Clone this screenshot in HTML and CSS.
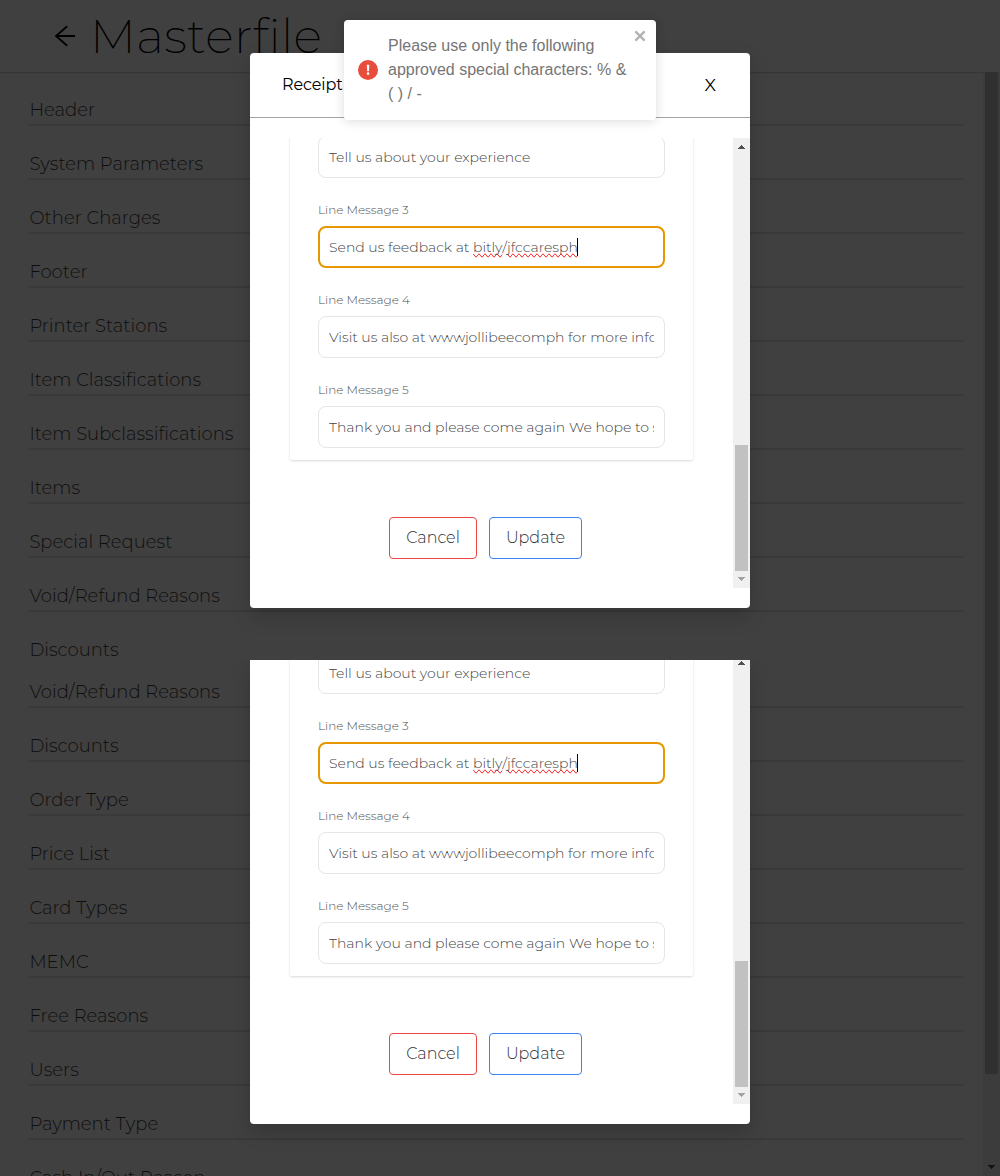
FILE: index.html
```html
<!DOCTYPE html>
<html lang="en">
<head>
<meta charset="utf-8">
<title>Masterfile</title>
<link rel="stylesheet" href="styles.css">
</head>
<body>
<div class="page">
  <header class="topbar">
    <svg class="back" width="22" height="22" viewBox="0 0 22 22"><path d="M21 11H2M13.2 1.2L2 11l11.2 9.8" fill="none" stroke="#000" stroke-width="1.8"/></svg>
    <h1 class="title">Masterfile</h1>
  </header>
  <div class="content">
    <ul class="menu">
      <li>Header</li>
      <li>System Parameters</li>
      <li>Other Charges</li>
      <li>Footer</li>
      <li>Printer Stations</li>
      <li>Item Classifications</li>
      <li>Item Subclassifications</li>
      <li>Items</li>
      <li>Special Request</li>
      <li>Void/Refund Reasons</li>
      <li class="short">Discounts</li>
      <li>Void/Refund Reasons</li>
      <li>Discounts</li>
      <li>Order Type</li>
      <li>Price List</li>
      <li>Card Types</li>
      <li>MEMC</li>
      <li>Free Reasons</li>
      <li>Users</li>
      <li>Payment Type</li>
      <li>Cash In/Out Reason</li>
    </ul>
    <div class="page-scroll">
      <div class="page-thumb"></div>
      <svg width="7" height="4" viewBox="0 0 7 4" shape-rendering="crispEdges"><path d="M0 0h7v1H6v1H5v1H4v1H3V3H2V2H1V1H0z" fill="#141414"/></svg>
    </div>
  </div>
</div>

<div class="overlay">
  <section class="modal">
    <div class="modal-head"><span>Receipt</span><span class="modal-x">X</span></div>
    <div class="viewport">
      <div class="form">
        <div class="card">
          <div class="field"><div class="input">Tell us about your experience</div></div>
          <div class="field"><label>Line Message 3</label><div class="input focus">Send us feedback at <span class="typo">bitly</span>/<span class="typo">jfccaresph</span><i class="caret"></i></div></div>
          <div class="field"><label>Line Message 4</label><div class="input"><span class="clip">Visit us also at wwwjollibeecomph for more info</span></div></div>
          <div class="field"><label>Line Message 5</label><div class="input"><span class="clip">Thank you and please come again We hope to see</span></div></div>
        </div>
        <div class="actions"><button class="btn cancel">Cancel</button><button class="btn update">Update</button></div>
      </div>
      <div class="scroll">
        <svg width="7" height="4" viewBox="0 0 7 4" shape-rendering="crispEdges"><path d="M3 0h1v1h1v1h1v1h1v1H0V3h1V2h1V1h1z" fill="#505050"/></svg>
        <div class="thumb"></div>
        <svg width="7" height="4" viewBox="0 0 7 4" shape-rendering="crispEdges"><path d="M0 0h7v1H6v1H5v1H4v1H3V3H2V2H1V1H0z" fill="#a3a3a3"/></svg>
      </div>
    </div>
  </section>

  <section class="modal lower">
    <div class="viewport">
      <div class="form">
        <div class="card">
          <div class="field"><div class="input">Tell us about your experience</div></div>
          <div class="field"><label>Line Message 3</label><div class="input focus">Send us feedback at <span class="typo">bitly</span>/<span class="typo">jfccaresph</span><i class="caret"></i></div></div>
          <div class="field"><label>Line Message 4</label><div class="input"><span class="clip">Visit us also at wwwjollibeecomph for more info</span></div></div>
          <div class="field"><label>Line Message 5</label><div class="input"><span class="clip">Thank you and please come again We hope to see</span></div></div>
        </div>
        <div class="actions"><button class="btn cancel">Cancel</button><button class="btn update">Update</button></div>
      </div>
      <div class="scroll">
        <svg width="7" height="4" viewBox="0 0 7 4" shape-rendering="crispEdges"><path d="M3 0h1v1h1v1h1v1h1v1H0V3h1V2h1V1h1z" fill="#505050"/></svg>
        <div class="thumb"></div>
        <svg width="7" height="4" viewBox="0 0 7 4" shape-rendering="crispEdges"><path d="M0 0h7v1H6v1H5v1H4v1H3V3H2V2H1V1H0z" fill="#a3a3a3"/></svg>
      </div>
    </div>
  </section>
</div>

<div class="toast">
  <svg width="20" height="20" viewBox="0 0 20 20"><circle cx="10" cy="10" r="10" fill="#e74c3c"/><path d="M8.8 4.8h2.5l-.4 6.4H9.2z" fill="#fff"/><circle cx="10.05" cy="13.6" r="1.3" fill="#fff"/></svg>
  <p>Please use only the following approved special characters: % &amp; ( ) / -</p>
  <svg class="toast-x" width="12" height="12" viewBox="0 0 12 12"><path d="M1.400 1.400l9.200 9.200M10.600 1.400l-9.200 9.200" stroke="#b0b0b0" stroke-width="2.200"/></svg>
</div>
</body>
</html>
```
FILE: styles.css
```css
* { box-sizing: border-box; }
body {
  margin: 0;
  width: 1000px;
  height: 1176px;
  overflow: hidden;
  position: relative;
  background: #404040;
  font-family: Montserrat, Inter, "Liberation Sans", sans-serif;
  font-weight: 300;
}
.page { height: 1176px; overflow: hidden; }
.topbar {
  height: 72px;
  display: flex;
  align-items: center;
  padding-left: 54px;
  box-shadow: 0 1px 1px rgba(0, 0, 0, .15);
}
.title { margin: 0 0 0 14px; font-size: 48px; font-weight: 200; line-height: 72px; letter-spacing: .3px; color: #000; }
.content { display: flex; justify-content: space-between; height: 1104px; }
.menu { list-style: none; margin: 0 0 0 29px; padding: 0; width: 934px; }
.menu li {
  height: 54px;
  padding: 26px 0 0 .4px;
  line-height: 24px;
  font-size: 18px;
  letter-spacing: .02px;
  border-bottom: 2px solid #393939;
  color: #0e0e0e;
}
.menu .short { height: 42px; border: 0; }
.page-scroll {
  width: 17px;
  display: flex;
  flex-direction: column;
  justify-content: space-between;
  align-items: center;
  background: #3c3c3c;
  padding-bottom: 7px;
}
.page-thumb { width: 13px; height: 1002px; background: #303030; }

.overlay { position: absolute; left: 250px; top: 53px; width: 500px; display: flex; flex-direction: column; gap: 52px; }
.modal { height: 555px; background: #fff; border-radius: 4px; box-shadow: 0 8px 20px rgba(0, 0, 0, .18); }
.modal.lower { height: 464px; border-radius: 0 0 4px 4px; clip-path: inset(0 -40px -40px -40px); }
.modal-head {
  height: 65px;
  border-bottom: 1px solid #a3a3a3;
  display: flex;
  align-items: center;
  justify-content: space-between;
  padding: 0 34px 1px 32px;
  font-size: 16px;
  letter-spacing: -.1px;
  font-weight: 400;
  color: #000;
}
.modal-x { font-size: 17.5px; letter-spacing: 0; }
.viewport { height: 450px; margin-top: 20px; overflow: hidden; display: flex; justify-content: space-between; align-items: flex-end; }
.lower .viewport { height: 444px; margin-top: 0; }
.form { width: 483px; height: 470px; padding: 0 40px; }
.card {
  width: 403px;
  height: 342px;
  padding: 18px 28px 0;
  border-radius: 2px;
  box-shadow: 0 1px 3px rgba(0, 0, 0, .1), 0 1px 2px rgba(0, 0, 0, .06);
}
.field { display: flex; flex-direction: column; margin-bottom: 22px; }
.field label { font-size: 12px; line-height: 20px; margin-bottom: 6px; color: #4f4f4f; }
.input {
  width: 347px;
  height: 42px;
  border: 1px solid #e5e5ea;
  border-radius: 8px;
  padding: 0 10px;
  display: flex;
  align-items: center;
  white-space: pre;
  font-size: 14px;
  color: #444;
}
.input.focus { border: 2px solid #e59700; padding: 0 9px; }
.clip { overflow: hidden; width: 325px; }
.typo { text-decoration: spelling-error; }
.caret { width: 1px; height: 18px; margin-left: -1px; background: #000; }
.actions { display: flex; gap: 12px; padding: 57px 0 0 99px; }
.btn {
  height: 42px;
  padding: 0 0 2px;
  border-radius: 4px;
  background: #fff;
  font: inherit;
  font-size: 16px;
  color: #303036;
}
.cancel { width: 88px; border: 1px solid #ef4444; }
.update { width: 93px; border: 1px solid #3b82f6; }
.scroll {
  width: 17px;
  height: 450px;
  background: #f0f0f0;
  display: flex;
  flex-direction: column;
  align-items: center;
  padding: 7px 0;
}
.thumb { width: 13px; height: 126px; margin: 296px 0 6px; background: #c1c1c1; flex: none; }

.toast {
  position: absolute;
  left: 344px;
  top: 20px;
  width: 312px;
  height: 100px;
  padding: 0 14px;
  display: flex;
  align-items: center;
  gap: 10px;
  background: #fff;
  border-radius: 4px;
  box-shadow: 0 1px 10px rgba(0, 0, 0, .1), 0 2px 15px rgba(0, 0, 0, .05);
  font: 400 16px/24px "Liberation Sans", Arial, sans-serif;
  color: #757575;
}
.toast p { margin: 0; width: 248px; }
.toast-x { position: absolute; right: 10px; top: 10px; }
```
